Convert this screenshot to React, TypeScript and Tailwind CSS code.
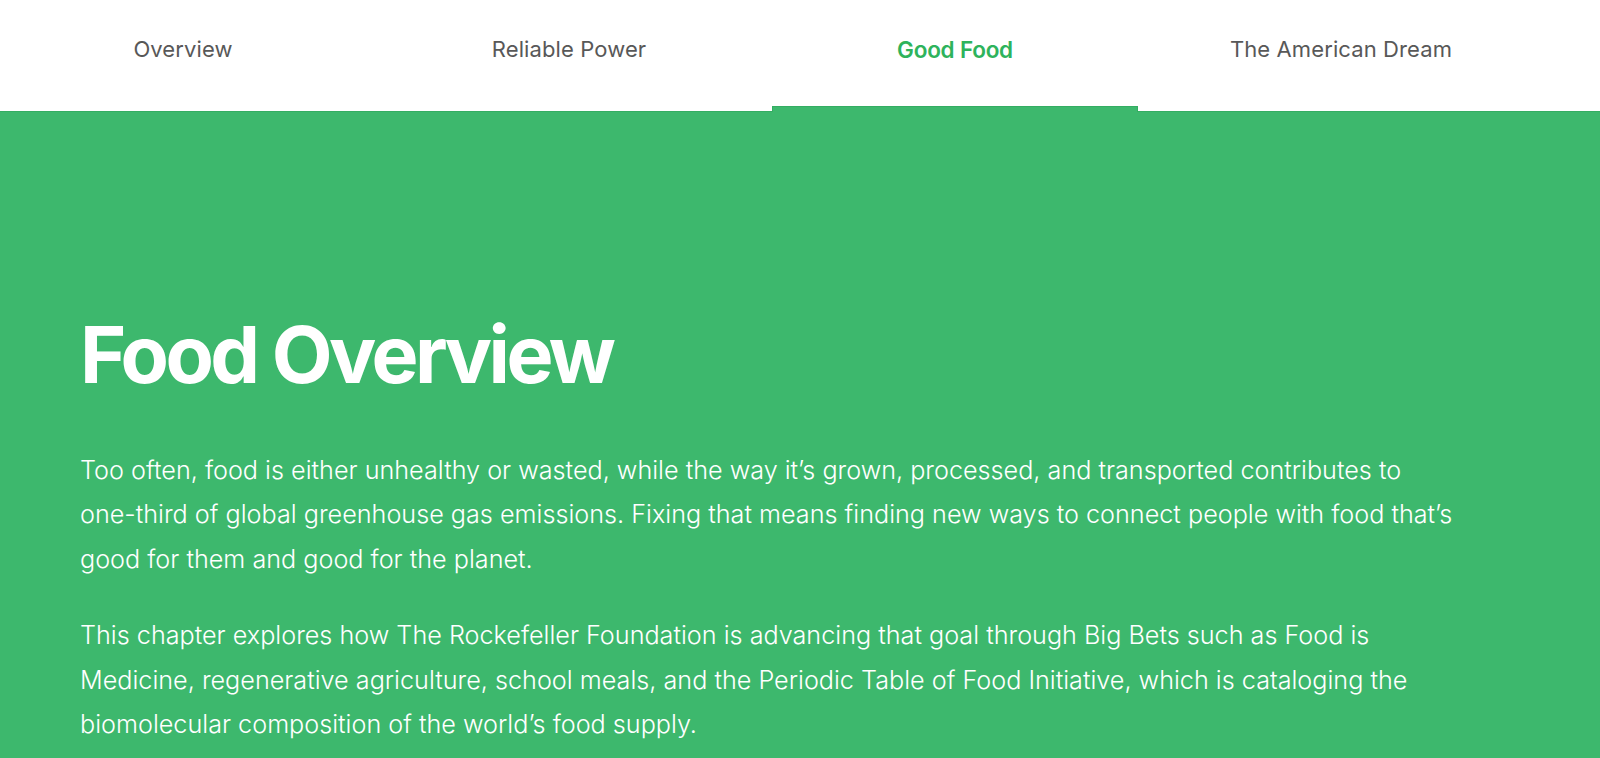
import React from "react";

const tabs = ["Overview", "Reliable Power", "Good Food", "The American Dream"];

const App: React.FC = () => {
  const active = 2;

  return (
    <div className="w-[1600px] h-[758px] overflow-hidden bg-[#3db86d] font-['Inter','Liberation_Sans',sans-serif]">
      {/* Chapter tabs */}
      <nav className="h-[112px] bg-white border-b border-[#34ad62]">
        <ul className="flex h-full ml-[-10px]">
          {tabs.map((tab, i) => (
            <li key={tab} className="relative w-[386px] h-full px-[10px]">
              <div className="flex justify-center pt-[33px]">
                <span
                  className={
                    i === active
                      ? "text-[22.5px] font-semibold text-[#2eb35c] tracking-[-0.01em]"
                      : "text-[22px] text-[#585858] tracking-[0.005em]"
                  }
                >
                  {tab}
                </span>
              </div>
              {i === active && (
                <div className="absolute left-[10px] right-[10px] bottom-[-1px] h-[6px] bg-[#3db86d] border-t border-l border-r border-[#34ad62]" />
              )}
            </li>
          ))}
        </ul>
      </nav>

      {/* Chapter intro */}
      <section className="px-[80px] pt-[203px] text-white">
        <h1 className="text-[79px] leading-none font-bold tracking-[-0.045em]">
          Food Overview
        </h1>
        <p className="mt-[54px] text-[25.2px] leading-[44.4px] font-light">
          Too often, food is either unhealthy or wasted, while the way it’s grown, processed, and transported contributes to
          <br />
          one-third of global greenhouse gas emissions. Fixing that means finding new ways to connect people with food that’s
          <br />
          good for them and good for the planet.
        </p>
        <p className="mt-[32px] text-[25.2px] leading-[44.4px] font-light">
          This chapter explores how The Rockefeller Foundation is advancing that goal through Big Bets such as Food is
          <br />
          Medicine, regenerative agriculture, school meals, and the Periodic Table of Food Initiative, which is cataloging the
          <br />
          biomolecular composition of the world’s food supply.
        </p>
      </section>
    </div>
  );
};

export default App;
